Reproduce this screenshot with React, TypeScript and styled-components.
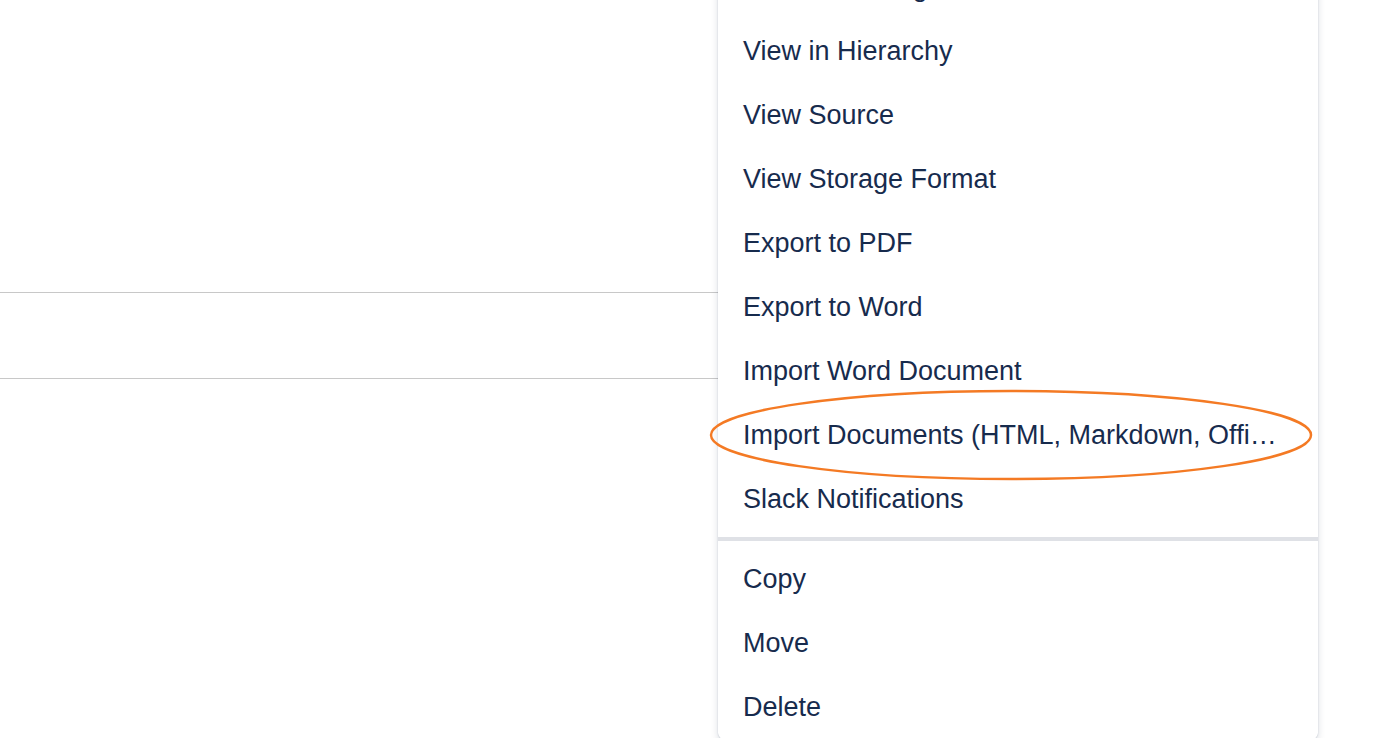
import React from "react";
import styled, { createGlobalStyle } from "styled-components";

const GlobalStyle = createGlobalStyle`
  html, body { margin: 0; padding: 0; background: #fff; overflow: hidden; }
  body { font-family: "Liberation Sans", Arial, sans-serif; }
`;

const topItems = [
  "Link to this Page",
  "View in Hierarchy",
  "View Source",
  "View Storage Format",
  "Export to PDF",
  "Export to Word",
  "Import Word Document",
  "Import Documents (HTML, Markdown, Office, and more)",
  "Slack Notifications",
];
const bottomItems = ["Copy", "Move", "Delete"];

const App: React.FC = () => {
  return (
    <Page>
      <GlobalStyle />
      <LeftPane>
        <Rule />
        <Rule />
      </LeftPane>
      <Menu>
        <Group>
          {topItems.map((t) => (
            <Item key={t}>{t}</Item>
          ))}
        </Group>
        <Separator />
        <Group>
          {bottomItems.map((t) => (
            <Item key={t}>{t}</Item>
          ))}
        </Group>
        <Highlight width="606" height="94" viewBox="0 0 606 94">
          <ellipse cx="303" cy="47" rx="300" ry="44" fill="none" stroke="#f47a24" strokeWidth="2.5" />
        </Highlight>
      </Menu>
    </Page>
  );
};

export default App;

const Page = styled.div`
  display: flex;
  width: 1396px;
  height: 738px;
  overflow: hidden;
`;

const LeftPane = styled.div`
  width: 718px;
  flex: 0 0 718px;
  padding-top: 292px;
  display: flex;
  flex-direction: column;
  gap: 85px;
`;

const Rule = styled.div`
  height: 1px;
  background: #c8c8c8;
`;

const Menu = styled.div`
  position: relative;
  width: 600px;
  margin-top: -45px;
  height: 784px;
  background: #fff;
  border-radius: 0 0 6px 6px;
  box-shadow: 0 0 1px rgba(9, 30, 66, 0.31), 0 4px 8px -2px rgba(9, 30, 66, 0.25);
  display: flex;
  flex-direction: column;
`;

const Group = styled.div`
  display: flex;
  flex-direction: column;
`;

const Item = styled.div`
  height: 64px;
  line-height: 64px;
  padding: 0 32px 0 25px;
  font-size: 27px;
  color: #172b4d;
  white-space: nowrap;
  overflow: hidden;
  text-overflow: ellipsis;
`;

const Separator = styled.div`
  height: 4px;
  margin: 6px 0;
  background: #dfe1e6;
`;

const Highlight = styled.svg`
  position: absolute;
  left: -10px;
  top: 433px;
  pointer-events: none;
`;
